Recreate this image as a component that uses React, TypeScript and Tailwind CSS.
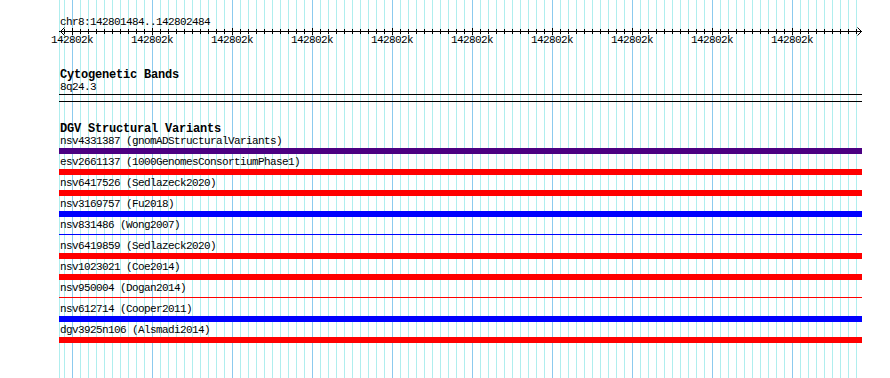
const MINOR = Array.from({ length: 100 }, (_, i) => 64 + i * 8);
const MAJOR = Array.from({ length: 10 }, (_, i) => 72 + i * 80);

const variants = [
  { label: "nsv4331387 (gnomADStructuralVariants)", color: "bg-[#4b0082]", thin: false },
  { label: "esv2661137 (1000GenomesConsortiumPhase1)", color: "bg-[#ff0000]", thin: false },
  { label: "nsv6417526 (Sedlazeck2020)", color: "bg-[#ff0000]", thin: false },
  { label: "nsv3169757 (Fu2018)", color: "bg-[#0000ff]", thin: false },
  { label: "nsv831486 (Wong2007)", color: "bg-[#0000ff]", thin: true },
  { label: "nsv6419859 (Sedlazeck2020)", color: "bg-[#ff0000]", thin: false },
  { label: "nsv1023021 (Coe2014)", color: "bg-[#ff0000]", thin: false },
  { label: "nsv950004 (Dogan2014)", color: "bg-[#ff0000]", thin: true },
  { label: "nsv612714 (Cooper2011)", color: "bg-[#0000ff]", thin: false },
  { label: "dgv3925n106 (Alsmadi2014)", color: "bg-[#ff0000]", thin: false },
];

const mono = "font-['Liberation_Mono','DejaVu_Sans_Mono',monospace] text-[11px] leading-[13px] tracking-[-0.6px] text-black whitespace-nowrap";
const monoBold = "font-['Liberation_Mono','DejaVu_Sans_Mono',monospace] font-bold text-[12px] leading-[12px] tracking-[-0.2px] text-black whitespace-nowrap";

function Grid() {
  return (
    <svg className="absolute inset-0" width={890} height={378} shapeRendering="crispEdges">
      <rect x={59} y={0} width={1} height={378} fill="#b0eeee" />
      {MINOR.map((x) => (
        <rect key={x} x={x} y={0} width={1} height={378} fill={(x - 72) % 80 === 0 ? "#8ccaee" : "#b0eeee"} />
      ))}
      {/* axis */}
      <rect x={59} y={31} width={803} height={1} fill="#000" />
      {MINOR.map((x) => (
        <rect key={"t" + x} x={x} y={(x - 72) % 80 === 0 ? 28 : 29} width={1} height={(x - 72) % 80 === 0 ? 7 : 5} fill="#000" />
      ))}
      <path d="M64.5 27.5 L60.5 31.5 L64.5 35.5" stroke="#000" fill="none" shapeRendering="auto" strokeWidth={1} />
      <path d="M857.5 27.5 L861.5 31.5 L857.5 35.5" stroke="#000" fill="none" shapeRendering="auto" strokeWidth={1} />
    </svg>
  );
}

export default function App() {
  return (
    <div className="relative w-[890px] h-[378px] bg-white overflow-hidden">
      <Grid />
      <div className="relative pl-[59px] pt-[16px]">
        <div className={`${mono} h-[13px] pl-px`}>chr8:142801484..142802484</div>

        <div className="mt-[5px] -ml-[27px] flex h-[13px]">
          {MAJOR.map((x) => (
            <div key={x} className={`${mono} w-[80px] text-center`}>142802k</div>
          ))}
        </div>

        <div className={`${monoBold} mt-[21px] h-[13px] pl-px pt-px`}>Cytogenetic Bands</div>
        <div className={`${mono} h-[13px] pl-px`}>8q24.3</div>
        <div className="w-[803px] h-px bg-black" />
        <div className="w-[803px] h-px bg-black mt-[6px]" />

        {/* DGV track */}
        <div className={`${monoBold} mt-[21px] h-[12px] leading-[11px] pl-px`}>DGV Structural Variants</div>
        <div className="flex flex-col">
          {variants.map((v) => (
            <div key={v.label} className="mb-[2px]">
              <div className={`${mono} h-[13px] pl-px`}>{v.label}</div>
              <div className="h-[6px] w-[803px] flex items-center">
                <div className={`w-full ${v.thin ? "h-px -mt-px" : "h-[6px]"} ${v.color}`} />
              </div>
            </div>
          ))}
        </div>
      </div>
    </div>
  );
}
